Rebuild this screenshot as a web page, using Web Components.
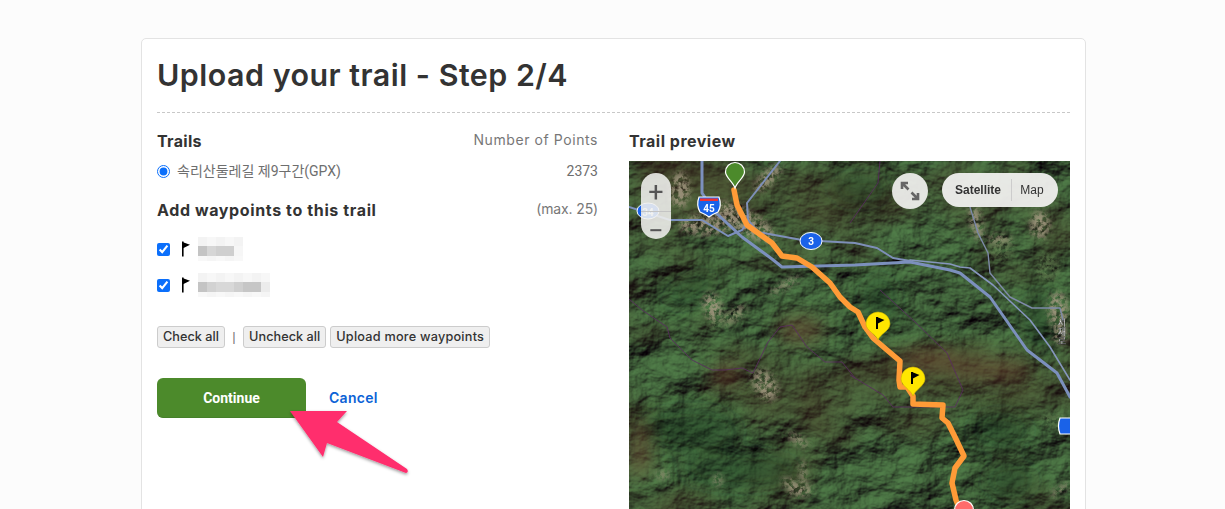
<!DOCTYPE html>
<html lang="en"><head><meta charset="utf-8"><title>Upload your trail</title>
<style>
html,body{margin:0;height:509px;overflow:hidden;background:#fcfcfc}
body{font-family:Inter,"Noto Sans CJK KR",sans-serif;color:#333}
</style></head><body>
<trail-page>
  <upload-card heading="Upload your trail - Step 2/4">
    <trail-form slot="left"></trail-form>
    <map-preview slot="right"></map-preview>
  </upload-card>
</trail-page>
<script>
const S='Inter,"Noto Sans CJK KR",sans-serif';
function def(name,html,setup){
  customElements.define(name,class extends HTMLElement{
    constructor(){super();this.attachShadow({mode:'open'}).innerHTML=typeof html==='function'?html(this):html;}
    connectedCallback(){
      if(this._d)return;this._d=1;
      if(typeof html==='function')this.shadowRoot.innerHTML=html(this);
      if(setup)setup(this);
    }
  });
}
def('trail-page',`<style>:host{display:block;position:relative;padding:38px 139px 0 141px;height:471px;overflow:hidden}</style><slot></slot><pink-arrow></pink-arrow>`);

def('upload-card',h=>`<style>
:host{display:block;box-sizing:border-box;height:600px;background:#fff;border:1px solid #e3e3e3;border-radius:5px;padding:0 15px}
h1{margin:0;height:74px;box-sizing:border-box;padding-top:18px;font:600 30.4px/36px ${S};letter-spacing:.5px;color:#333;border-bottom:1px dashed #c8c8c8}
.cols{display:grid;grid-template-columns:441px 441px;column-gap:31px;padding-top:17px}
</style><h1>${h.getAttribute('heading')||''}</h1><div class="cols"><div><slot name="left"></slot></div><div><slot name="right"></slot></div></div>`);

def('row-head',h=>`<style>
:host{display:flex;justify-content:space-between;align-items:center;height:21px;box-sizing:border-box;padding-top:1px}
b{font:700 16px/20px ${S};color:#333;letter-spacing:${h.getAttribute('ls')||'.3'}px}
span{font:400 14px/20px ${S};color:#777;letter-spacing:${h.getAttribute('nls')||'.2'}px;position:relative;top:-1px}
</style><b>${h.getAttribute('title')}</b><span>${h.getAttribute('note')||''}</span>`);

def('way-point',h=>{
  const cols=(h.getAttribute('cells')||'').split(',');
  const cw=9,w=cols.length*cw;
  const rects=cols.map((c,i)=>`<rect x="${i*cw}" y="9" width="${cw}" height="10" fill="#${c}"/><rect x="${i*cw}" y="0" width="${cw}" height="9" fill="#f${i%2?'7f7f7':'3f3f3'}"/><rect x="${i*cw}" y="19" width="${cw}" height="5" fill="#f${i%2?'5f5f5':'8f8f8'}"/>`).join('');
  return `<style>
:host{display:flex;align-items:center;height:24px;position:relative}
input{appearance:auto;accent-color:#0b6ffb;width:13px;height:13px;margin:0}
.flag{margin-left:11px;width:10px;height:16px;flex:none}
.m{margin-left:${h.getAttribute('gap')||'5'}px;display:block}
</style><input type="checkbox" checked>
<svg class="flag" viewBox="0 0 10 16"><path d="M1 .5h1.6v15H1z" fill="#000"/><path d="M2 1.2l7 2.6L2 7.2z" fill="#000"/></svg>
<svg class="m" width="${w}" height="24">${rects}</svg>`;
});

def('small-button',`<style>
:host{display:inline-block}
button{all:unset;display:block;box-sizing:border-box;height:22px;padding:0 5px;background:#efefef;border:1px solid #ccc;border-radius:3px;font:500 12.7px/20px ${S};color:#333;letter-spacing:var(--ls,.03px);white-space:nowrap}
</style><button><slot></slot></button>`);

def('trail-form',`<style>
:host{display:block}
.trail{display:flex;align-items:center;height:20px;margin-top:10px;font:400 14px/20px Roboto,"Noto Sans CJK KR",sans-serif;color:#6e6e6e}
input{accent-color:#0b6ffb;width:13px;height:13px;margin:0 7px 0 0}
.trail .n{margin-left:auto;font-size:14px}
.wps{margin-top:17px}
.add{margin-top:18px}
.wp2{margin-top:12px}
.btns{display:flex;align-items:center;margin-top:29px}
.sep{width:18px;text-align:center;color:#777;font:400 13px/22px "Liberation Sans",sans-serif}
.sp{width:4px}
.up{--ls:.22px}
.actions{display:flex;align-items:center;margin-top:30px}
.go{all:unset;box-sizing:border-box;width:149px;height:40px;border-radius:6px;background:#4c8a2b;border-bottom:1px solid #45802a;color:#fff;text-align:center;font:700 14px/40px Roboto,sans-serif}
a{margin-left:23px;color:#0b62d6;font:600 14px/20px ${S};letter-spacing:.3px;text-decoration:none}
</style>
<row-head title="Trails" note="Number of Points" nls=".58"></row-head>
<div class="trail"><input type="radio" checked><span>속리산둘레길 제9구간(GPX)</span><span class="n">2373</span></div>
<row-head class="add" title="Add waypoints to this trail" ls=".62" note="(max. 25)" nls="-.13"></row-head>
<div class="wps">
<way-point gap="7" cells="c4c4c4,d6d6d6,cfcfcf,cfcfcf,f6f6f6"></way-point>
<way-point class="wp2" gap="7" cells="c4c4c4,d2d2d2,d8d8d8,d8d8d8,cfcfcf,c6c6c6,c6c6c6,ececec"></way-point>
</div>
<div class="btns"><small-button>Check all</small-button><span class="sep">|</span><small-button>Uncheck all</small-button><span class="sp"></span><small-button class="up">Upload more waypoints</small-button></div>
<div class="actions"><button class="go">Continue</button><a href="#">Cancel</a></div>`);

def('pink-arrow',`<style>
:host{position:absolute;left:285px;top:405px;width:130px;height:75px;display:block;pointer-events:none}
svg{display:block;overflow:visible}
</style><svg width="130" height="75" viewBox="285 405 130 75">
<defs><filter id="s" x="-20%" y="-20%" width="140%" height="140%"><feDropShadow dx="0" dy="1.5" stdDeviation="1.5" flood-color="#000" flood-opacity=".4"/></filter></defs>
<path d="M290 411L347 411L337 422L407 469Q409 472 406 473L327 443L323 457Z" fill="#ff2d6d" filter="url(#s)"/></svg>`);

def('map-preview',()=>{
 const p=a=>a.map(([x,y])=>`${x-629},${y-161}`).join(' ');
 const road=(a,w=3,c='#7c90bd')=>`<polyline points="${p(a)}" fill="none" stroke="${c}" stroke-width="${w}" stroke-linejoin="round" stroke-linecap="round"/>`;
 const bd=a=>`<polyline points="${p(a)}" fill="none" stroke="#5a2a62" stroke-width="1" opacity=".8"/>`;
 const tan=(x,y,rx,ry,r=0)=>`<ellipse cx="${x-629}" cy="${y-161}" rx="${rx}" ry="${ry}" transform="rotate(${r} ${x-629} ${y-161})"/>`;
 const route=[[734,190],[737,205],[747,225],[758,233],[772,243],[782,256],[797,258],[812,267],[830,283],[840,297],[850,307],[858,312],[865,327],[873,338],[887,350],[900,361],[899,380],[900,387],[907,387],[913,396],[913,404],[943,405],[942,418],[948,423],[955,437],[964,456],[955,468],[952,483],[956,500],[960,510]];
 const pin=(x,y,c,r,tip,st,sw)=>`<path d="M${x-629} ${y-161+tip}C${x-629-2} ${y-161+tip-6} ${x-629-r} ${y-161+r*.55} ${x-629-r} ${y-161}A${r} ${r} 0 1 1 ${x-629+r} ${y-161}C${x-629+r} ${y-161+r*.55} ${x-629+2} ${y-161+tip-6} ${x-629} ${y-161+tip}Z" fill="${c}" stroke="${st}" stroke-width="${sw}"/>`;
 const flag=(x,y)=>`<path d="M${x-629-2} ${y-161-6}h2v12h-2z" fill="#000"/><path d="M${x-629-1} ${y-161-6}l7.5 3-7.5 4z" fill="#000"/>`;
 return `<style>
:host{display:block}
h2{margin:4px 0 13px;font:700 16px/14px ${S};letter-spacing:.5px;color:#333;height:14px}
.map{position:relative;height:400px;overflow:hidden;background:#3d5d36}
svg{display:block;position:absolute;left:0;top:0}
.ctl{position:absolute;background:rgba(240,240,238,.88);color:#555}
.zoom{left:12px;top:12px;width:30px;height:66px;border-radius:15px;display:grid;grid-template-rows:1fr 1fr;font:400 27px/38px Roboto,sans-serif;text-align:center}
.zoom span:first-child{border-bottom:1px solid #c4c4c4}
.full{left:263px;top:12px;width:36px;height:36px;border-radius:18px;display:flex;align-items:center;justify-content:center;background:rgba(240,240,238,.93)}
.type{left:313px;top:12px;width:116px;height:34px;border-radius:17px;display:flex;align-items:center;font:400 12px/34px "Liberation Sans",sans-serif;color:#333;background:rgba(240,240,238,.95)}
.type b{width:69px;text-align:center;font-weight:700;padding-left:3px;box-sizing:border-box}
.type i{font-style:normal;flex:1;text-align:center;border-left:1px solid #ccc;height:22px;line-height:22px;padding-right:6px}
</style><h2>Trail preview</h2>
<div class="map">
<svg width="441" height="400" viewBox="0 0 441 400">
<defs>
<filter id="t" x="0" y="0" width="100%" height="100%" color-interpolation-filters="sRGB">
<feTurbulence type="fractalNoise" baseFrequency=".016 .022" numOctaves="7" seed="23"/>
<feDiffuseLighting surfaceScale="9" diffuseConstant="1" lighting-color="#fff"><feDistantLight azimuth="235" elevation="52"/></feDiffuseLighting>
<feColorMatrix values=".42 0 0 0 -.1  .72 0 0 0 -.22  .38 0 0 0 -.09  0 0 0 0 1"/>
</filter>
<filter id="b" x="0" y="0" width="100%" height="100%" color-interpolation-filters="sRGB">
<feTurbulence type="fractalNoise" baseFrequency=".008 .011" numOctaves="3" seed="5"/>
<feColorMatrix values="0 0 0 0 .30  0 0 0 0 .23  0 0 0 0 .15  2.6 0 0 0 -1.15"/>
</filter>
<filter id="r" x="-40%" y="-40%" width="180%" height="180%" color-interpolation-filters="sRGB">
<feGaussianBlur in="SourceGraphic" stdDeviation="3" result="a"/>
<feTurbulence type="fractalNoise" baseFrequency=".22" numOctaves="3" seed="4"/>
<feColorMatrix values="0 0 0 0 0 0 0 0 0 0 0 0 0 0 0 4 0 0 0 -1.4" result="n"/>
<feComposite in="a" in2="n" operator="in"/>
<feGaussianBlur stdDeviation=".6"/>
</filter>
<filter id="bl" x="-50%" y="-50%" width="200%" height="200%"><feGaussianBlur stdDeviation="9"/></filter>
</defs>
<rect width="441" height="400" filter="url(#t)"/>
<rect width="441" height="400" filter="url(#b)" opacity=".5"/>
<g fill="#17391f" opacity=".4" filter="url(#bl)">
${tan(690,290,28,12,-30)}${tan(860,190,30,14)}${tan(690,430,50,22)}${tan(1000,430,30,18)}${tan(1010,480,25,18)}${tan(880,300,18,24)}${tan(740,470,60,18)}${tan(1040,320,16,30)}
</g>
<g fill="#6b4a32" opacity=".6" filter="url(#bl)">
${tan(800,330,24,14)}${tan(725,375,16,12)}${tan(990,370,40,12)}${tan(640,450,12,30)}${tan(930,360,30,12)}
</g>
<g fill="#a59a82" opacity=".85" filter="url(#r)">
${tan(745,222,34,12,30)}${tan(705,225,26,10)}${tan(768,178,18,7,-45)}${tan(680,190,10,18)}${tan(735,315,14,5,-40)}${tan(713,308,9,16,-15)}${tan(765,385,11,17,-30)}${tan(798,440,12,4,30)}${tan(803,473,3,14)}${tan(790,483,10,4,20)}${tan(800,490,13,6)}${tan(1060,490,12,3,-35)}${tan(785,285,18,3,-30)}${tan(718,480,4,6)}${tan(663,475,8,3)}
${tan(976,222,6,18,-12)}${tan(1000,240,12,5)}${tan(1058,310,10,18)}${tan(1060,335,7,10)}${tan(1040,225,10,14)}
</g>
<g fill="#6d8c58" opacity=".55" filter="url(#r)">
${tan(1000,250,14,10)}${tan(1048,268,12,14)}${tan(1055,420,14,8)}${tan(725,320,18,5,-30)}
</g>
${road([[780,161],[747,203],[748,220],[758,232],[802,240],[855,243],[877,248],[893,258],[910,261]],2,'#7e8fb8')}
${road([[702,161],[702,193],[715,212],[742,237],[772,259],[782,267],[855,265],[910,262],[950,270],[960,273],[990,297],[1027,350],[1057,373],[1070,397]],3)}
${road([[629,207],[670,220],[702,220],[728,236],[742,230],[748,222]],2)}
${road([[910,260],[950,264],[960,267],[970,268],[993,285],[1030,320],[1050,347],[1070,380]],1.6,'#8696bd')}
${road([[970,207],[978,233],[988,253],[990,273],[1010,297],[1032,308],[1060,308],[1063,320]],1.4,'#7e8aa8')}
${bd([[629,299],[642,310],[667,327],[670,338],[692,360],[712,370],[725,370],[742,368],[753,373],[768,342],[780,327],[792,325],[807,347],[825,362],[842,362],[855,378]])}
${bd([[880,161],[878,183],[850,223]])}
${bd([[880,290],[915,322],[947,353],[963,390],[955,407],[893,407],[883,395],[850,375]])}
<polyline points="${p(route)}" fill="none" stroke="#ff9b37" stroke-width="5.5" stroke-linejoin="round" stroke-linecap="round"/>
${pin(735,172,'#4c8a2b',9.5,16,'#fff',1.2)}
${pin(878,324,'#ffe600',12,16,'#c9b400',.6)}${flag(878,323)}
${pin(913,379,'#ffe600',12,17,'#c9b400',.6)}${flag(913,378)}
<circle cx="335" cy="349" r="9.5" fill="#ff6b6b" stroke="#fff" stroke-width="1.2"/>
<g text-anchor="middle" font-family="Roboto,sans-serif" font-weight="700">
<ellipse cx="19" cy="50" rx="11" ry="8" fill="#1a62e8" stroke="#fff" stroke-width="1"/><text x="19" y="54.5" font-size="10" fill="#fff">34</text>
<g transform="translate(-1 2)"><path d="M71 34h20q3 8-1 15-5 2-9 5-4-3-9-5-4-7-1-15z" fill="#1a62e8" stroke="#fff" stroke-width="1.2"/><rect x="72" y="35.5" width="18" height="2.5" fill="#e33"/><text x="81" y="49" font-size="10" fill="#fff">45</text></g>
<ellipse cx="182" cy="80" rx="11" ry="8.5" fill="#1a62e8" stroke="#fff" stroke-width="1"/><text x="182" y="84" font-size="10" fill="#fff">3</text>
<path d="M431 257h12v16h-12q-3-8 0-16z" fill="#1a62e8" stroke="#fff" stroke-width="1.2"/>
<text x="433" y="171" font-size="9" font-family="'Noto Sans CJK KR',sans-serif" font-weight="500" fill="#eee" stroke="#333" stroke-width=".3" writing-mode="vertical-rl">서재로</text>
</g>
</svg>
<div class="ctl zoom"><span>+</span><span>−</span></div>
<div class="ctl full"><svg style="position:static" width="22" height="22" viewBox="0 0 22 22"><path d="M3 9V3H9M3 3L9.5 9.5M19 13V19H13M19 19L12.5 12.5" fill="none" stroke="#666" stroke-width="2.6"/></svg></div>
<div class="ctl type"><b>Satellite</b><i>Map</i></div>
</div>`;
});
</script>
</body></html>
